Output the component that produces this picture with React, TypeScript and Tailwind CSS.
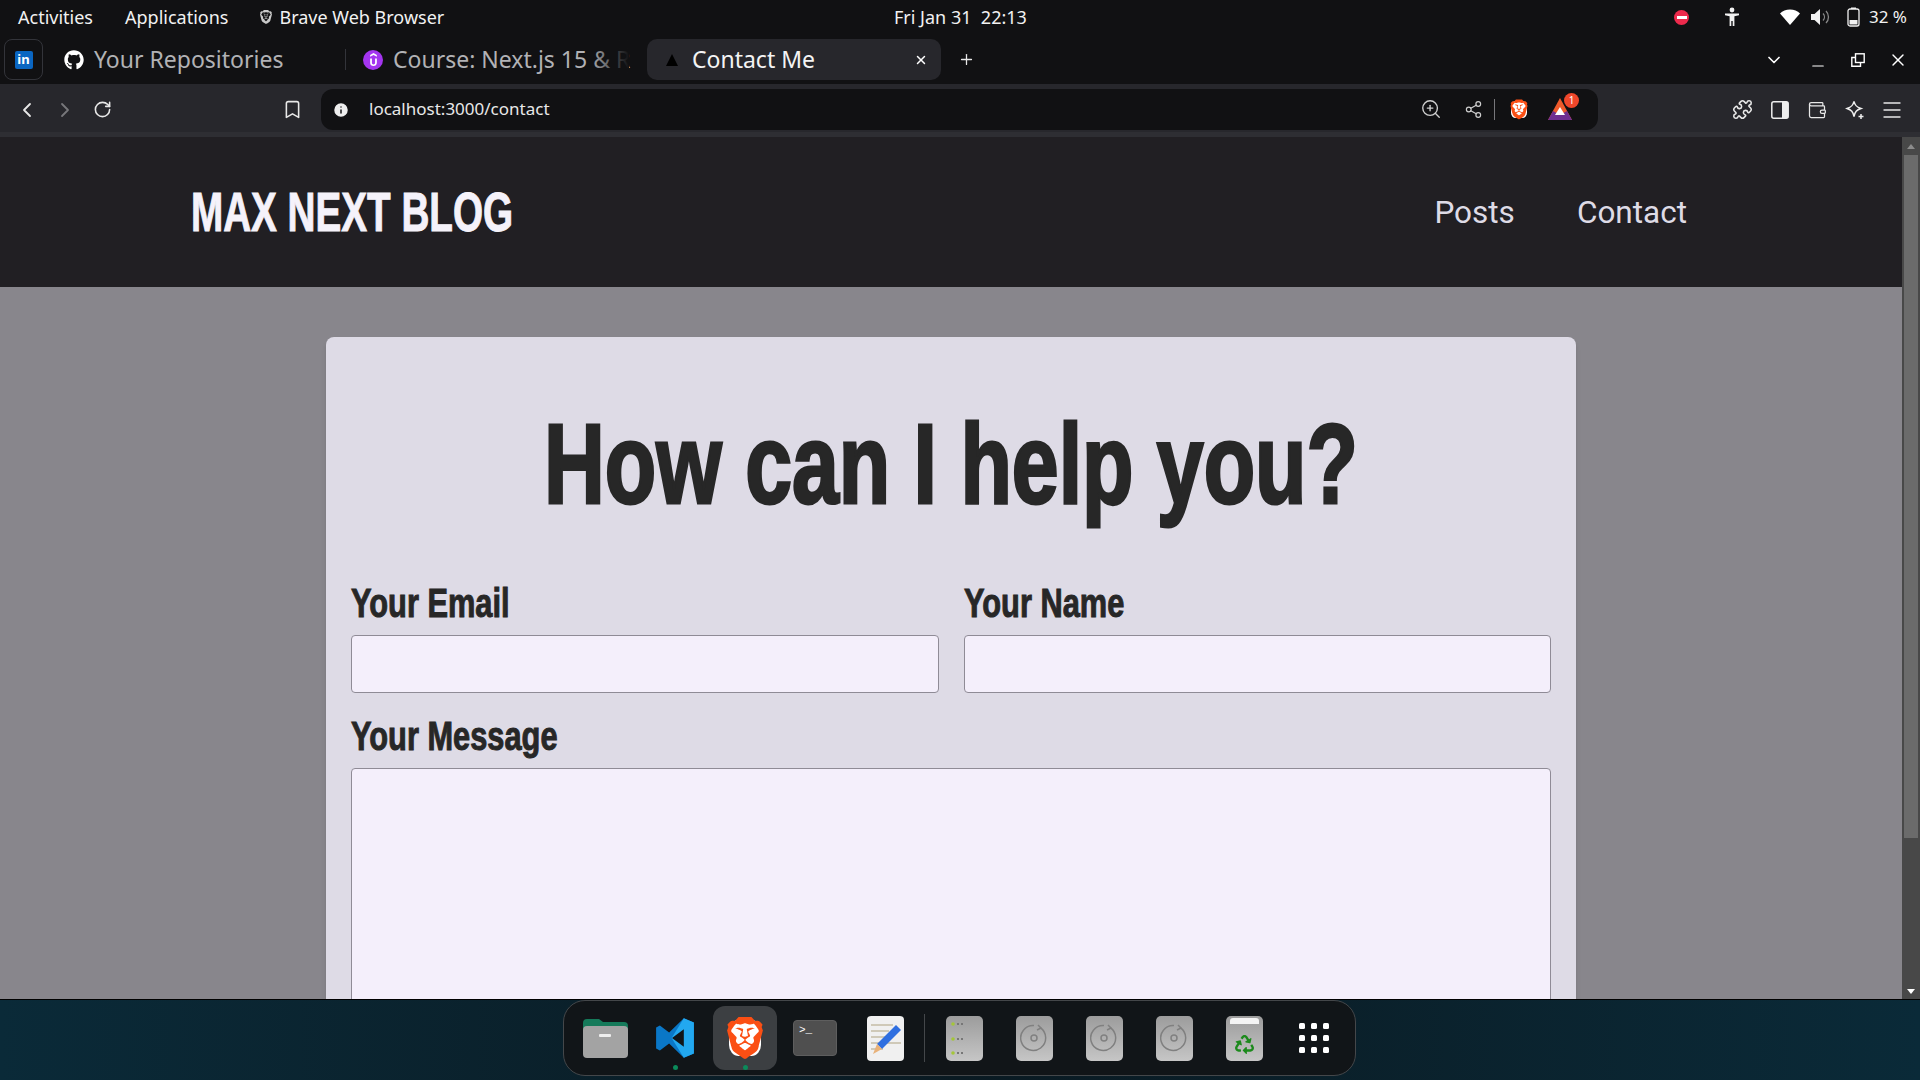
import React from 'react';
import { ChevronLeft, ChevronRight, RotateCw, Bookmark, Info, ZoomIn, Share2, Puzzle, Wallet, Menu, X, Plus, ChevronDown, Minus } from 'lucide-react';
import { SiBrave, SiUdemy } from 'react-icons/si';
import { FaGithub, FaRecycle } from 'react-icons/fa';

const uiFont = { fontFamily: '"Noto Sans", "Open Sans", sans-serif' };
const headFont = { fontFamily: '"Liberation Sans", sans-serif' };

function BraveIcon({ size = 24 }: { size?: number }) {
  return (
    <div className="relative" style={{ width: size, height: size * 1.14 }}>
      <div className="absolute inset-[12%] bg-white rounded-[30%]" />
      <SiBrave className="absolute inset-0 text-[#fb4f14]" style={{ width: size, height: size * 1.14 }} />
    </div>
  );
}

function StatusBar() {
  return (
    <div className="h-[33px] pt-[1px] bg-[#111113] text-[#f2f2f2] flex items-center text-[18px] relative" style={uiFont}>
      <span className="ml-[18px]">Activities</span>
      <span className="ml-[32px]">Applications</span>
      <SiBrave className="ml-[31px] text-[#c9c9c9]" size={14} />
      <span className="ml-[6px]">Brave Web Browser</span>
      <span className="absolute left-[894px]">Fri Jan 31&nbsp; 22:13</span>
      <div className="ml-auto flex items-center">
        <div className="w-[15px] h-[15px] rounded-full bg-[#ed2a4c] flex items-center justify-center">
          <div className="w-[10px] h-[3px] bg-white" />
        </div>
        <svg className="ml-[35px]" width="16" height="20" viewBox="0 0 16 20" fill="#f2f2f2">
          <circle cx="8" cy="3" r="2.4" />
          <path d="M1 6.5h14v1.8l-4.6 1V19H8.7v-5H7.3v5H5.6V9.3L1 8.3z" />
        </svg>
        <svg className="ml-[40px]" width="20" height="16" viewBox="0 0 20 16" fill="#fff">
          <path d="M10 16L0 4.5C2.5 2 6 .5 10 .5s7.500 1.500 10 4z" />
        </svg>
        <svg className="ml-[11px]" width="20" height="18" viewBox="0 0 20 18" fill="none">
          <path d="M0 6h3.500L9 1v16l-5.500-5H0z" fill="#f2f2f2" />
          <path d="M12 5.500a5 5 0 010 7M15 3a8.500 8.500 0 010 12" stroke="#888" strokeWidth="1.300" />
        </svg>
        <svg className="ml-[16px]" width="13" height="20" viewBox="0 0 13 20" fill="none">
          <rect x="1" y="2" width="11" height="17" rx="2" stroke="#f2f2f2" strokeWidth="1.300" />
          <rect x="4" y="0.500" width="5" height="1.500" fill="#f2f2f2" />
          <rect x="2.500" y="13" width="8" height="4.500" fill="#f2f2f2" />
        </svg>
        <span className="ml-[9px] mr-[13px] text-[17px]">32 %</span>
      </div>
    </div>
  );
}

function TabStrip() {
  return (
    <div className="h-[51px] bg-[#111113] flex items-start pt-[6px] text-[23px]" style={uiFont}>
      <div className="ml-[4px] w-[39px] h-[41px] rounded-lg border border-[#33343a] flex items-center justify-center">
        <div className="w-[18px] h-[18px] rounded-[2px] bg-[#0a66c2] text-white text-[13px] font-bold flex items-center justify-center leading-none">in</div>
      </div>
      <div className="ml-[21px] h-[41px] flex items-center w-[281px] text-[#b2b2b5]">
        <FaGithub className="text-white" size={20} />
        <span className="ml-[10px]">Your Repositories</span>
      </div>
      <div className="mt-[10px] w-px h-[21px] bg-[#33343a]" />
      <div className="ml-[17px] h-[41px] w-[284px] flex items-center text-[#b2b2b5] relative">
        <div className="w-[20px] h-[20px] shrink-0 rounded-full bg-[#a435f0] flex items-center justify-center">
          <SiUdemy className="text-white" size={13} />
        </div>
        <span className="ml-[10px] whitespace-nowrap">Course: Next.js 15 &amp; R</span>
        <div className="absolute left-[226px] top-0 bottom-0 w-[40px] bg-gradient-to-r from-transparent to-[#111113]" />
      </div>
      <div className="w-[294px] h-[41px] rounded-[10px] bg-[#27272c] flex items-center text-[#f4f4f4]">
        <svg className="ml-[18px]" width="14" height="14" viewBox="0 0 14 14"><path d="M7 1l6 12H1z" fill="#000" /></svg>
        <span className="ml-[13px]">Contact Me</span>
        <X className="ml-auto mr-[13px]" size={14} strokeWidth={2.500} color="#fff" />
      </div>
      <Plus className="ml-[17px] mt-[12px]" size={17} strokeWidth={1.800} color="#e8e8e8" />
      <div className="ml-auto flex items-center h-[41px] text-white">
        <ChevronDown size={20} strokeWidth={2} />
        <Minus className="ml-[25px] mt-[12px]" size={18} strokeWidth={1.500} />
        <svg className="ml-[24px]" width="14" height="14" viewBox="0 0 14 14" fill="none" stroke="#fff" strokeWidth="1.400">
          <rect x="4.500" y="0.800" width="8.700" height="8.700" />
          <path d="M4.500 4.500H.8v8.700h8.700V9.500" />
        </svg>
        <X className="ml-[23px] mr-[12px]" size={20} strokeWidth={1.700} />
      </div>
    </div>
  );
}

function Toolbar() {
  return (
    <div className="h-[53px] bg-[#27272c] border-b-[5px] border-[#2e2e33] flex items-start pt-[5px] text-[#e8e8e8]" style={uiFont}>
      <div className="w-[321px] h-[41px] flex items-center shrink-0">
        <ChevronLeft className="ml-[15px]" size={24} strokeWidth={1.800} />
        <ChevronRight className="ml-[14px] text-[#77777b]" size={24} strokeWidth={1.800} />
        <RotateCw className="ml-[16px]" size={19} strokeWidth={2} />
        <Bookmark className="ml-[170px]" size={21} strokeWidth={1.800} />
      </div>
      <div className="w-[1277px] h-[41px] rounded-[12px] bg-[#111113] flex items-center shrink-0">
        <Info className="ml-[11px] text-[#111113]" size={18} fill="#eee" strokeWidth={2} />
        <span className="ml-[19px] pb-[1px] text-[17px]">localhost:3000/contact</span>
        <div className="ml-auto flex items-center">
          <ZoomIn size={22} strokeWidth={1.500} className="text-[#cfcfcf]" />
          <Share2 className="ml-[22px] text-[#cfcfcf]" size={19} strokeWidth={1.500} />
          <div className="ml-[11px] w-px h-[21px] bg-[#77777b]" />
          <div className="ml-[14px]"><BraveIcon size={20} /></div>
          <div className="ml-[19px] mr-[26px] relative">
            <svg width="24" height="22" viewBox="0 0 24 22">
              <path d="M12 0l12 22H0z" fill="#ef5a2b" />
              <path d="M0 22l5-9 7 4 7-4 5 9z" fill="#6f2f91" />
              <path d="M12 9l5 8H7z" fill="#fff" />
            </svg>
            <div className="absolute -top-[5px] -right-[7px] w-[15px] h-[15px] rounded-full bg-[#f0472b] text-white text-[10px] flex items-center justify-center">1</div>
          </div>
        </div>
      </div>
      <div className="flex-1 h-[41px] flex items-center pl-[134px]">
        <Puzzle size={21} strokeWidth={1.800} />
        <svg className="ml-[18px]" width="18" height="18" viewBox="0 0 18 18">
          <rect x="0.800" y="0.800" width="16.400" height="16.400" rx="2" fill="none" stroke="#eee" strokeWidth="1.500" />
          <rect x="11" y="1" width="6" height="16" fill="#eee" />
        </svg>
        <Wallet className="ml-[18px]" size={20} strokeWidth={1.500} />
        <svg className="ml-[18px]" width="20" height="20" viewBox="0 0 20 20" fill="none" stroke="#eee" strokeWidth="1.500">
          <path d="M9 1.500c1 4 2.500 5.500 7 7-4.500 1.500-6 3-7 8-1-5-2.500-6.500-7-8 4.500-1.500 6-3 7-7z" />
          <path d="M16 14v5M13.500 16.500h5" />
        </svg>
        <Menu className="ml-[15px]" size={24} strokeWidth={1.400} />
      </div>
    </div>
  );
}

function Field({ label, className }: { label: string; className?: string }) {
  return (
    <div className={className}>
      <label className="block h-[42px] -mt-[1px] text-[40px] leading-[42px] font-bold whitespace-nowrap origin-left scale-x-[0.77] [-webkit-text-stroke:1px_#272727]" style={headFont}>
        {label}
      </label>
      <div className="mt-[11px] h-[58px] rounded-[4px] border border-[#8f8b96] bg-[#f4effb]" />
    </div>
  );
}

function Page() {
  return (
    <div className="flex-1 min-w-0 overflow-hidden bg-[#88868c]">
      <header className="h-[150px] bg-[#211f23] flex items-center pl-[191px]">
        <div className="text-[56px] font-bold text-[#f5f2fa] whitespace-nowrap origin-left scale-x-[0.69] [-webkit-text-stroke:1px_#f5f2fa]" style={headFont}>
          MAX NEXT BLOG
        </div>
        <nav className="ml-auto mr-[215px] pt-[2px] flex gap-[62px] text-[31.5px] text-[#dedbe6]" style={{ fontFamily: 'Roboto, sans-serif' }}>
          <a>Posts</a>
          <a>Contact</a>
        </nav>
      </header>
      <main className="w-[1250px] ml-[326px] mt-[50px] rounded-lg bg-[#dedbe6] shadow-md px-[25px] text-[#272727]">
        <h1 className="pt-[62px] h-[246px] text-center text-[113px] leading-[130px] font-bold whitespace-nowrap scale-x-[0.745] [-webkit-text-stroke:3px_#272727]" style={headFont}>
          How can I help you?
        </h1>
        <div className="flex gap-[25px]">
          <Field label="Your Email" className="w-[588px]" />
          <Field label="Your Name" className="w-[587px]" />
        </div>
        <label className="mt-[22px] block h-[42px] text-[40px] leading-[42px] font-bold whitespace-nowrap origin-left scale-x-[0.77] [-webkit-text-stroke:1px_#272727]" style={headFont}>
          Your Message
        </label>
        <div className="mt-[11px] h-[300px] rounded-[4px] border border-[#8f8b96] bg-[#f4effb]" />
      </main>
    </div>
  );
}

function Scrollbar() {
  return (
    <div className="w-[18px] bg-[#484848] flex flex-col items-center">
      <div className="h-[18px] shrink-0 flex items-center justify-center">
        <div className="w-0 h-0 border-x-[4px] border-x-transparent border-b-[5px] border-b-[#8c8c8c]" />
      </div>
      <div className="w-[14px] h-[683px] shrink-0 bg-[#6b6b6b]" />
      <div className="mt-auto h-[16px] flex items-center justify-center">
        <div className="w-0 h-0 border-x-[4px] border-x-transparent border-t-[5px] border-t-white" />
      </div>
    </div>
  );
}

function Tile({ children }: { children?: React.ReactNode }) {
  return <div className="w-[37px] h-[45px] rounded-[5px] bg-gradient-to-b from-[#9c9c9c] to-[#c6c6c6] flex items-center justify-center">{children}</div>;
}

function Disc() {
  return (
    <Tile>
      <svg width="28" height="28" viewBox="0 0 28 28" fill="none" stroke="#808080" strokeWidth="1.500">
        <path d="M20 3.500A12.500 12.500 0 1 1 14 1.500" />
        <path d="M18 1l3 3-4 2" />
        <circle cx="14" cy="14" r="3" />
      </svg>
    </Tile>
  );
}

function DockCell({ children, dot, active }: { children: React.ReactNode; dot?: boolean; active?: boolean }) {
  return (
    <div className="w-[70px] h-[64px] flex items-center justify-center relative">
      {active && <div className="absolute left-[3px] top-0 w-[64px] h-[64px] rounded-[12px] bg-[#3c3f42]" />}
      <div className="relative">{children}</div>
      {dot && <div className="absolute bottom-[0px] left-[33px] w-[5px] h-[5px] rounded-full bg-[#0b8a5a]" />}
    </div>
  );
}

function Dock() {
  return (
    <div className="h-[81px] border-t border-black bg-gradient-to-r from-[#0a2a38] via-[#0a1a22] to-[#0a2a38] flex items-start pl-[563px]">
      <div className="w-[793px] h-[76px] rounded-[22px] border border-[#44474a] bg-[#111518] flex items-center pl-[6px]">
        <DockCell>
          <svg width="45" height="40" viewBox="0 0 45 40">
            <path d="M0 5a4 4 0 014-4h12l4 3h21a4 4 0 014 4v12H0z" fill="#157a5a" />
            <rect y="8" width="45" height="32" rx="4" fill="#a3a3a3" />
            <rect x="16" y="16" width="12" height="3" rx="1" fill="#eee" />
          </svg>
        </DockCell>
        <DockCell dot>
          <svg width="42" height="42" viewBox="0 0 100 100">
            <path d="M71 3L36 37 14 20 5 25v50l9 5 22-17 35 34 24-10V13z" fill="#0a77c7" />
            <path d="M71 3l24 10v74L71 97 42 50z" fill="#22a8f0" />
            <path d="M71 29v42L43 50z" fill="#111518" />
          </svg>
        </DockCell>
        <DockCell active dot>
          <BraveIcon size={42} />
        </DockCell>
        <DockCell>
          <div className="w-[44px] h-[36px] rounded-[4px] bg-[#4f4f4f] border border-[#5e5e5e] text-white text-[11px] leading-none pl-[5px] pt-[4px]" style={{ fontFamily: '"Liberation Mono", monospace' }}>&gt;_</div>
        </DockCell>
        <DockCell>
          <div className="w-[37px] h-[45px] rounded-[4px] bg-[#f0f0f0] relative overflow-hidden">
            <svg width="37" height="45" viewBox="0 0 37 45">
              <path d="M4 9h22M4 15h18M4 21h14M4 27h30M4 33h12" stroke="#cfc9b8" strokeWidth="2" />
              <path d="M29 9l5 5-19 19-5-5z" fill="#2f6fe0" />
              <path d="M10 28l5 5-9 5z" fill="#e8b27a" />
            </svg>
          </div>
        </DockCell>
        <div className="w-[9px] flex justify-center">
          <div className="w-px h-[48px] bg-[#44474a]" />
        </div>
        <DockCell>
          <Tile>
            <svg width="37" height="45" viewBox="0 0 37 45">
              {[8, 23, 37].map((y) => (
                <g key={y}>
                  <circle cx="7" cy={y} r="1.800" fill="#a4c639" />
                  <rect x="11" y={y - 1} width="2" height="2" fill="#777" />
                  <rect x="15" y={y - 1} width="2" height="2" fill="#777" />
                </g>
              ))}
            </svg>
          </Tile>
        </DockCell>
        <DockCell><Disc /></DockCell>
        <DockCell><Disc /></DockCell>
        <DockCell><Disc /></DockCell>
        <DockCell>
          <div className="relative">
            <Tile />
            <div className="absolute left-[4px] top-[2px] w-[29px] h-[6px] rounded-t-[3px] bg-[#f4f4f4]" />
            <FaRecycle className="absolute left-[9px] top-[19px] text-[#1c8a1c]" size={19} />
          </div>
        </DockCell>
        <DockCell>
          <div className="grid grid-cols-3 gap-[6px]">
            {Array.from({ length: 9 }).map((_, i) => (
              <div key={i} className="w-[6px] h-[6px] rounded-[1.500px] bg-white" />
            ))}
          </div>
        </DockCell>
      </div>
    </div>
  );
}

export default function App() {
  return (
    <div className="h-screen flex flex-col overflow-hidden">
      <StatusBar />
      <TabStrip />
      <Toolbar />
      <div className="flex-1 min-h-0 flex overflow-hidden">
        <Page />
        <Scrollbar />
      </div>
      <Dock />
    </div>
  );
}
